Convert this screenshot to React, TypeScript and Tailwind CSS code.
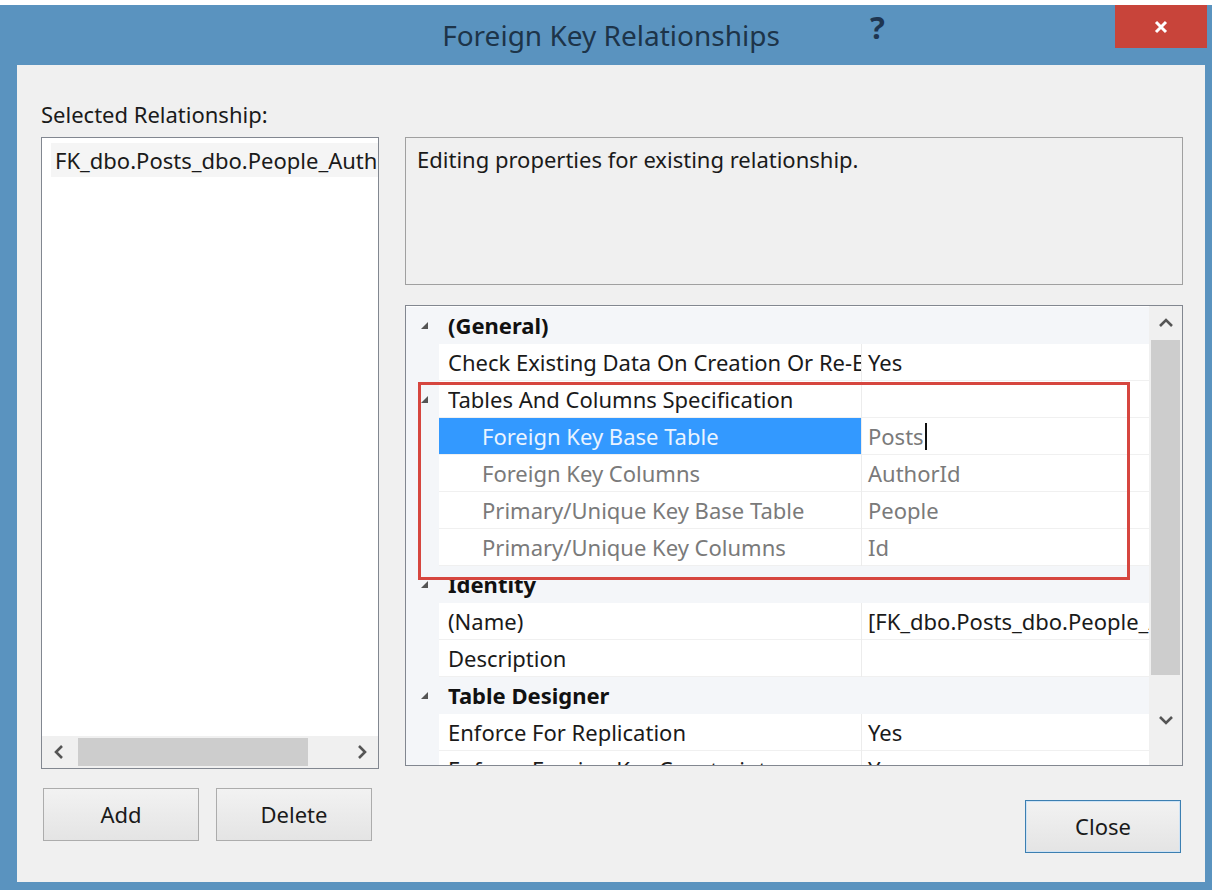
import React from "react";

type Row =
  | { kind: "cat"; label: string }
  | {
      kind: "prop";
      label: string;
      value?: string;
      sub?: boolean;
      expander?: boolean;
      selected?: boolean;
      caret?: boolean;
    };

const rows: Row[] = [
  { kind: "cat", label: "(General)" },
  { kind: "prop", label: "Check Existing Data On Creation Or Re-Enabling", value: "Yes" },
  { kind: "prop", label: "Tables And Columns Specification", expander: true },
  { kind: "prop", label: "Foreign Key Base Table", value: "Posts", sub: true, selected: true, caret: true },
  { kind: "prop", label: "Foreign Key Columns", value: "AuthorId", sub: true },
  { kind: "prop", label: "Primary/Unique Key Base Table", value: "People", sub: true },
  { kind: "prop", label: "Primary/Unique Key Columns", value: "Id", sub: true },
  { kind: "cat", label: "Identity" },
  { kind: "prop", label: "(Name)", value: "[FK_dbo.Posts_dbo.People_AuthorId]" },
  { kind: "prop", label: "Description", value: "" },
  { kind: "cat", label: "Table Designer" },
  { kind: "prop", label: "Enforce For Replication", value: "Yes" },
  { kind: "prop", label: "Enforce Foreign Key Constraint", value: "Yes" },
];

function Expander() {
  return (
    <svg width="7" height="7" viewBox="0 0 7 7">
      <polygon points="7,0 7,7 0,7" fill="#555" />
    </svg>
  );
}

function Chevron({ dir }: { dir: "left" | "right" | "up" | "down" }) {
  const d = {
    left: "M10 2 L4 8 L10 14",
    right: "M6 2 L12 8 L6 14",
    up: "M2 11 L8 5 L14 11",
    down: "M2 5 L8 11 L14 5",
  }[dir];
  return (
    <svg width="16" height="16" viewBox="0 0 16 16">
      <path d={d} fill="none" stroke="#555" strokeWidth="2.6" />
    </svg>
  );
}

function GridRow({ row }: { row: Row }) {
  if (row.kind === "cat") {
    return (
      <div className="flex h-[37px] shrink-0 items-center bg-[#f4f6f9]">
        <div className="flex w-[33px] shrink-0 justify-center pl-[4px]">
          <Expander />
        </div>
        <div className="pl-[9px] font-bold text-[#111]">{row.label}</div>
      </div>
    );
  }
  return (
    <div className="flex h-[37px] shrink-0">
      <div className="flex w-[33px] shrink-0 items-center justify-center bg-[#f4f6f9] pl-[4px]">
        {row.expander && <Expander />}
      </div>
      <div
        className={`flex w-[422px] shrink-0 items-center overflow-hidden whitespace-nowrap border-b border-[#f0f0f0] ${
          row.sub ? "pl-[43px]" : "pl-[9px]"
        } ${row.selected ? "bg-[#3399ff] text-[#eaf4ff]" : row.sub ? "text-[#7a7a7a]" : "text-[#1a1a1a]"}`}
      >
        <span className="block overflow-hidden">{row.label}</span>
      </div>
      <div className="w-px shrink-0 bg-[#ececec]" />
      <div
        className={`flex min-w-0 flex-1 items-center overflow-hidden whitespace-nowrap border-b border-[#f0f0f0] pl-[6px] ${
          row.sub ? "text-[#7a7a7a]" : "text-[#1a1a1a]"
        }`}
      >
        {row.value}
        {row.caret && <span className="ml-px inline-block h-[27px] w-[2px] bg-[#111]" />}
      </div>
    </div>
  );
}

function Button({ label, primary }: { label: string; primary?: boolean }) {
  return (
    <div
      className={`flex h-[53px] w-[156px] items-center justify-center border bg-gradient-to-b from-[#f2f2f2] to-[#e4e4e4] text-[#1a1a1a] ${
        primary ? "border-[#3c7fb1] shadow-[inset_0_0_0_1px_#cfe3f5]" : "border-[#acacac]"
      }`}
    >
      {label}
    </div>
  );
}

export default function App() {
  return (
    <div className="relative h-[890px] w-[1212px] overflow-hidden bg-white pt-[5px] font-['Segoe_UI','Noto_Sans',sans-serif] text-[22px]">
      <div className="flex h-[885px] flex-col bg-[#5a93bf] pb-[8px] pl-[17px] pr-[7px]">
        {/* title bar */}
        <div className="relative flex h-[60px] shrink-0 items-center justify-center">
          <span className="text-[28px] text-[#1d3449]">Foreign Key Relationships</span>
          <span className="absolute left-[853px] top-[7px] text-[31px] font-bold leading-none text-[#1e3550]">?</span>
          <div className="absolute right-[-2px] top-0 flex h-[43px] w-[92px] items-center justify-center bg-[#c8443a]">
            <svg width="14" height="14" viewBox="0 0 14 14">
              <path d="M2 2 L12 12 M12 2 L2 12" stroke="#fff" strokeWidth="3" />
            </svg>
          </div>
        </div>

        {/* client area */}
        <div className="flex flex-1 flex-col bg-[#f0f0f0] pl-[24px] pt-[37px]">
          <div className="mb-[11px] h-[24px] leading-[24px] text-[#1a1a1a]">Selected Relationship:</div>
          <div className="flex">
            <div className="flex w-[338px] flex-col">
              <div className="flex h-[632px] flex-col overflow-hidden border border-[#828790] bg-white">
                <div className="flex flex-1 flex-col pl-[9px] pt-[5px]">
                  <div className="flex h-[34px] items-center overflow-hidden whitespace-nowrap bg-[#f5f5f5] pl-[4px] text-[#1a1a1a]">
                    FK_dbo.Posts_dbo.People_AuthorId
                  </div>
                </div>
                <div className="flex h-[32px] items-center bg-[#f0f0f0]">
                  <div className="flex w-[36px] justify-center">
                    <Chevron dir="left" />
                  </div>
                  <div className="h-[28px] w-[230px] bg-[#cdcdcd]" />
                  <div className="flex flex-1 justify-end pr-[9px]">
                    <Chevron dir="right" />
                  </div>
                </div>
              </div>
              <div className="mt-[19px] flex gap-[17px] pl-[2px]">
                <Button label="Add" />
                <Button label="Delete" />
              </div>
            </div>

            <div className="ml-[26px] flex w-[778px] flex-col">
              <div className="h-[148px] border border-[#a0a0a0] px-[11px] pt-[5px] text-[#1a1a1a]">
                Editing properties for existing relationship.
              </div>
              <div className="mt-[20px] flex h-[461px] border border-[#828790] bg-white">
                <div className="flex min-w-0 flex-1 flex-col overflow-hidden pt-px">
                  {rows.map((r, i) => (
                    <GridRow key={i} row={r} />
                  ))}
                </div>
                <div className="flex w-[33px] shrink-0 flex-col items-center bg-[#f0f0f0]">
                  <div className="flex h-[34px] items-center">
                    <Chevron dir="up" />
                  </div>
                  <div className="h-[335px] w-[29px] bg-[#cdcdcd]" />
                  <div className="flex flex-1 items-center">
                    <Chevron dir="down" />
                  </div>
                </div>
              </div>
              <div className="mt-[34px] flex justify-end pr-[2px]">
                <Button label="Close" primary />
              </div>
            </div>
          </div>
        </div>
      </div>

      {/* highlight frame over the column-spec rows */}
      <div className="absolute left-[418px] top-[382px] h-[198px] w-[712px] border-[3px] border-[#d6463f]" />
    </div>
  );
}
